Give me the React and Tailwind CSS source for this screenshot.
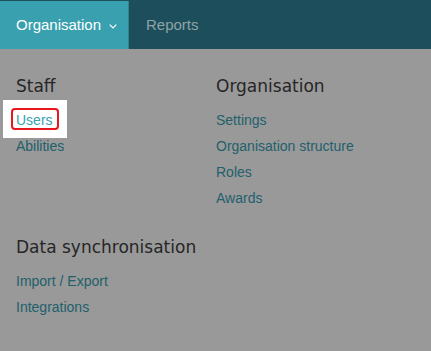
import { ChevronDown } from "lucide-react";

const staffLinks = ["Users", "Abilities"];
const orgLinks = ["Settings", "Organisation structure", "Roles", "Awards"];
const syncLinks = ["Import / Export", "Integrations"];

function Heading({ children }) {
  return (
    <h3
      className="h-[24px] text-[17px] leading-[24px] text-[#262626] mb-[9px]"
      style={{ fontFamily: '"DejaVu Sans", sans-serif' }}
    >
      {children}
    </h3>
  );
}

function LinkRow({ label, highlight }) {
  if (highlight) {
    return (
      <div className="relative h-[26px]">
        <div className="absolute left-[-13px] top-[-7px] w-[64px] h-[38px] bg-white" />
        <div className="absolute left-[-5px] top-[1px] w-[48px] h-[22px] border-2 border-[#e8161d] rounded-[4px]" />
        <a className="relative block text-[14px] leading-[26px] text-[#3aa0b2]">{label}</a>
      </div>
    );
  }
  return <a className="block h-[26px] text-[14px] leading-[26px] text-[#22606c]">{label}</a>;
}

export default function App() {
  return (
    <div className="w-[431px] h-[351px] bg-[#999999] overflow-hidden" style={{ fontFamily: '"Liberation Sans", Arial, sans-serif' }}>
      <nav className="flex h-[49px] bg-[#1c4f5b] pt-px">
        <div className="flex items-center w-[129px] h-[48px] pl-4 bg-[#38a0ae] border-r border-[#2b8593] text-white text-[15px]">
          Organisation
          <svg className="ml-[8px] mt-[2px]" width="8" height="5" viewBox="0 0 8 5" fill="none">
            <polyline points="0.7,0.7 4,4 7.3,0.7" stroke="white" strokeWidth="1.2" />
          </svg>
        </div>
        <div className="flex items-center pl-[17px] text-[15px] text-[#8fa3a6]">Reports</div>
      </nav>

      <div className="px-4 pt-[25px]">
        <div className="flex">
          <div className="w-[200px]">
            <Heading>Staff</Heading>
            {staffLinks.map((l) => (
              <LinkRow key={l} label={l} highlight={l === "Users"} />
            ))}
          </div>
          <div>
            <Heading>Organisation</Heading>
            {orgLinks.map((l) => (
              <LinkRow key={l} label={l} />
            ))}
          </div>
        </div>

        <div className="mt-6">
          <Heading>Data synchronisation</Heading>
          {syncLinks.map((l) => (
            <LinkRow key={l} label={l} />
          ))}
        </div>
      </div>
    </div>
  );
}
